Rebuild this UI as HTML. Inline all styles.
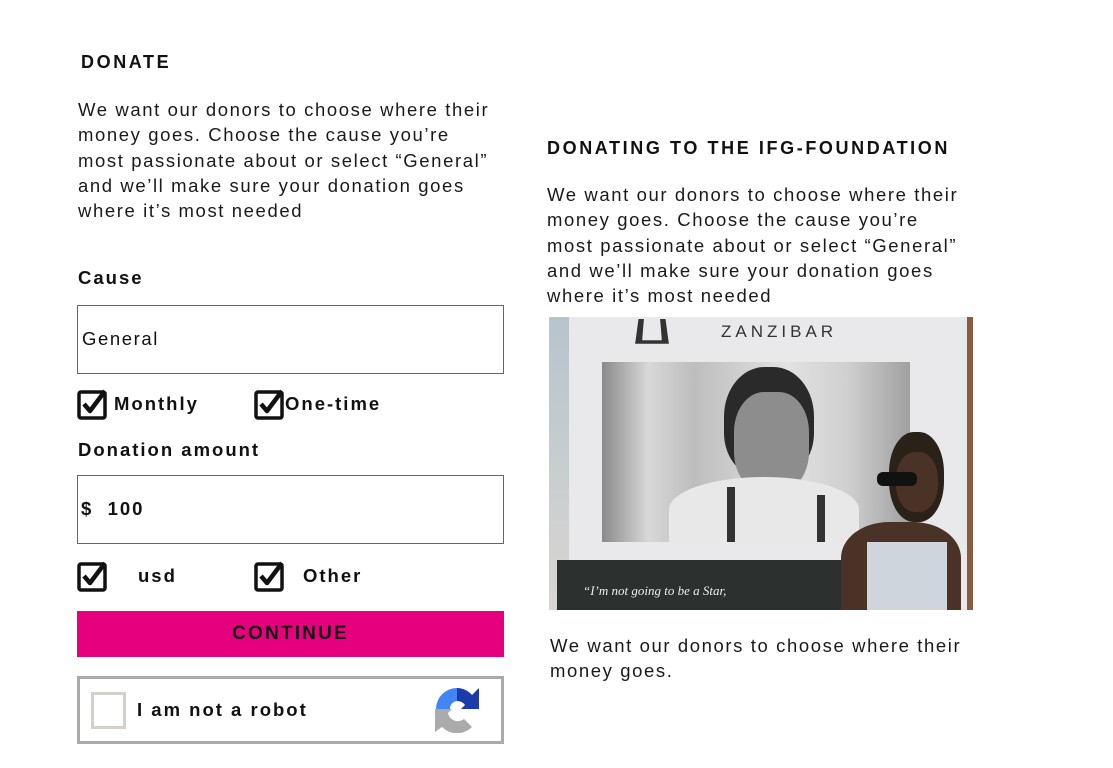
<!DOCTYPE html>
<html><head><meta charset="utf-8"><style>
*{margin:0;padding:0;box-sizing:border-box}
body{width:1113px;height:768px;background:#fff;position:relative;font-family:"Liberation Sans",sans-serif;color:#111;overflow:hidden}
.a{position:absolute;white-space:nowrap}
.h{font-weight:bold;font-size:18px;letter-spacing:2.6px}
.p{font-size:18.5px;line-height:25.3px;letter-spacing:1.6px;color:#1a1a1a}
.lbl{font-weight:bold;font-size:18.5px;letter-spacing:2px}
.box{border:1px solid #666;background:#fff}
.cb{width:32px;height:32px}
</style></head><body>
<div class="a h" style="left:81px;top:52px">DONATE</div>
<div class="a p" style="left:78px;top:97px">We want our donors to choose where their<br>money goes. Choose the cause you’re<br>most passionate about or select “General”<br>and we’ll make sure your donation goes<br>where it’s most needed</div>
<div class="a lbl" style="left:78px;top:267px">Cause</div>
<div class="a box" style="left:77px;top:305px;width:427px;height:69px"></div>
<div class="a" style="left:82px;top:328px;font-size:18.5px;letter-spacing:1.6px">General</div>

<svg class="a cb" style="left:77px;top:388px" viewBox="0 0 32 32"><rect x="2" y="4" width="26" height="26" rx="2" fill="none" stroke="#111" stroke-width="3.5"/><path d="M7 16 L13 23 L28 3" fill="none" stroke="#111" stroke-width="4.5" stroke-linejoin="round"/></svg>
<div class="a lbl" style="left:114px;top:393px">Monthly</div>
<svg class="a cb" style="left:254px;top:388px" viewBox="0 0 32 32"><rect x="2" y="4" width="26" height="26" rx="2" fill="none" stroke="#111" stroke-width="3.5"/><path d="M7 16 L13 23 L28 3" fill="none" stroke="#111" stroke-width="4.5" stroke-linejoin="round"/></svg>
<div class="a lbl" style="left:285px;top:393px">One-time</div>

<div class="a lbl" style="left:78px;top:439px">Donation amount</div>
<div class="a box" style="left:77px;top:475px;width:427px;height:69px"></div>
<div class="a lbl" style="left:81px;top:498px">$&nbsp;&nbsp;100</div>

<svg class="a cb" style="left:77px;top:560px" viewBox="0 0 32 32"><rect x="2" y="4" width="26" height="26" rx="2" fill="none" stroke="#111" stroke-width="3.5"/><path d="M7 16 L13 23 L28 3" fill="none" stroke="#111" stroke-width="4.5" stroke-linejoin="round"/></svg>
<div class="a lbl" style="left:138px;top:565px">usd</div>
<svg class="a cb" style="left:254px;top:560px" viewBox="0 0 32 32"><rect x="2" y="4" width="26" height="26" rx="2" fill="none" stroke="#111" stroke-width="3.5"/><path d="M7 16 L13 23 L28 3" fill="none" stroke="#111" stroke-width="4.5" stroke-linejoin="round"/></svg>
<div class="a lbl" style="left:303px;top:565px">Other</div>

<div class="a" style="left:77px;top:611px;width:427px;height:46px;background:#e6007e;text-align:center;font-weight:bold;font-size:19px;letter-spacing:2.2px;line-height:46px;color:#111">CONTINUE</div>

<div class="a" style="left:77px;top:676px;width:427px;height:68px;border:3px solid #aaa;background:#fff"></div>
<div class="a" style="left:91px;top:692px;width:35px;height:37px;border:3px solid #d6d0ca"></div>
<div class="a lbl" style="left:137px;top:699px">I am not a robot</div>
<svg class="a" style="left:434px;top:687px" width="46" height="46" viewBox="0 0 46 46">
<path d="M2 22 A21 21 0 0 1 23 1 L23 14 A8 8 0 0 0 16 20 L16 22 Z" fill="#4285f4"/>
<path d="M23 1 A21 21 0 0 1 38 8 L45 1 L45 22 L27 22 L31 18 A10 10 0 0 0 23 14 Z" fill="#1c3aa9"/>
<path d="M1 22 L18 22 L14 26 A10 10 0 0 0 30 32 L38 40 A21 21 0 0 1 8 40 L1 45 Z" fill="#ababab"/>
</svg>

<div class="a h" style="left:547px;top:138px">DONATING TO THE IFG-FOUNDATION</div>
<div class="a p" style="left:547px;top:182px">We want our donors to choose where their<br>money goes. Choose the cause you’re<br>most passionate about or select “General”<br>and we’ll make sure your donation goes<br>where it’s most needed</div>

<div class="a" style="left:549px;top:317px;width:424px;height:293px;background:#e9e9eb;overflow:hidden">
  <div class="a" style="left:0;top:0;width:20px;height:293px;background:linear-gradient(#b7c4cc,#d9d6d2)"></div>
  <div class="a" style="right:0;top:0;width:6px;height:293px;background:#8b5a3c"></div>
  <div class="a" style="left:88px;top:0;width:30px;height:26px;border-left:6px solid #333;border-right:6px solid #333;border-bottom:3px solid #333;transform:perspective(40px) rotateX(20deg)"></div>
  <div class="a" style="left:172px;top:5px;font-size:17px;letter-spacing:4px;color:#333">ZANZIBAR</div>
  <div class="a" style="left:53px;top:45px;width:308px;height:180px;background:linear-gradient(90deg,#8a8a8a,#d8d8d8 15%,#bdbdbd 30%,#e2e2e2 60%,#cfcfcf 80%,#a0a0a0)"></div>
  <div class="a" style="left:175px;top:50px;width:90px;height:110px;border-radius:45% 45% 40% 40%;background:#2a2a2a"></div>
  <div class="a" style="left:185px;top:75px;width:75px;height:100px;border-radius:40%;background:#8d8d8d"></div>
  <div class="a" style="left:120px;top:160px;width:190px;height:65px;border-radius:50% 50% 0 0;background:#e8e8e8"></div>
  <div class="a" style="left:178px;top:170px;width:8px;height:55px;background:#333"></div>
  <div class="a" style="left:268px;top:178px;width:8px;height:47px;background:#333"></div>
  <div class="a" style="left:8px;top:243px;width:300px;height:50px;background:#2c3130"></div>
  <div class="a" style="left:34px;top:266px;font-size:13px;font-style:italic;color:#eee;font-family:'Liberation Serif',serif">“I’m not going to be a Star,</div>
  <div class="a" style="left:340px;top:115px;width:55px;height:90px;border-radius:45%;background:#2a2118"></div>
  <div class="a" style="left:347px;top:135px;width:42px;height:60px;border-radius:45%;background:#4a3226"></div>
  <div class="a" style="left:328px;top:155px;width:40px;height:14px;border-radius:6px;background:#111"></div>
  <div class="a" style="left:292px;top:205px;width:120px;height:90px;border-radius:40% 40% 0 0;background:#4a3226"></div>
  <div class="a" style="left:318px;top:225px;width:80px;height:70px;background:#cfd5dc"></div>
</div>

<div class="a p" style="left:550px;top:633px">We want our donors to choose where their<br>money goes.</div>
</body></html>
